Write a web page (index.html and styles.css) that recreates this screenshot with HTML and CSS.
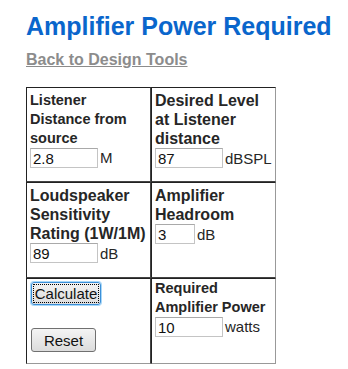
FILE: index.html
```html
<!DOCTYPE html>
<html lang="en">
<head>
  <meta charset="UTF-8">
  <meta name="viewport" content="width=device-width, initial-scale=1.0">
  <title>Amplifier Power Required</title>
  <link rel="stylesheet" href="styles.css">
</head>
<body>
  <div class="page">
    <h1 class="title">Amplifier Power Required</h1>
    <a class="back-link" href="#">Back to Design Tools</a>

    <table class="calc-table">
      <colgroup>
        <col class="col">
        <col class="col">
      </colgroup>
      <tr class="row-1">
        <td class="label-sm">
          Listener Distance from source<br>
          <input type="text" class="field" id="distance" value="2.8"><span class="unit">M</span>
        </td>
        <td class="last-col">
          Desired Level at Listener distance<br>
          <input type="text" class="field" id="level" value="87"><span class="unit">dBSPL</span>
        </td>
      </tr>
      <tr class="row-2">
        <td>
          Loudspeaker Sensitivity Rating (1W/1M)<br>
          <input type="text" class="field" id="sensitivity" value="89"><span class="unit">dB</span>
        </td>
        <td class="last-col">
          Amplifier Headroom<br>
          <input type="text" class="field field-short" id="headroom" value="3"><span class="unit">dB</span>
        </td>
      </tr>
      <tr class="row-3">
        <td class="last-row">
          <div class="buttons">
            <button type="button" class="btn btn-calc" onclick="calculate()">Calculate</button>
            <button type="button" class="btn btn-reset" onclick="resetForm()">Reset</button>
          </div>
        </td>
        <td class="last-col last-row label-sm result-cell">
          Required Amplifier Power<br>
          <input type="text" class="field" id="power" value="10"><span class="unit">watts</span>
        </td>
      </tr>
    </table>
  </div>

  <script>
    const distance = document.getElementById('distance');
    const level = document.getElementById('level');
    const sensitivity = document.getElementById('sensitivity');
    const headroom = document.getElementById('headroom');
    const power = document.getElementById('power');

    function calculate() {
      const d = parseFloat(distance.value);
      const spl = parseFloat(level.value);
      const sens = parseFloat(sensitivity.value);
      const head = parseFloat(headroom.value);
      if (isNaN(d) || isNaN(spl) || isNaN(sens) || isNaN(head)) {
        power.value = '';
        return;
      }
      const loss = 20 * Math.log10(d);
      const db = spl + head + loss - sens;
      power.value = Math.round(Math.pow(10, db / 10));
    }

    function resetForm() {
      distance.value = '';
      level.value = '';
      sensitivity.value = '';
      headroom.value = '';
      power.value = '';
    }
  </script>
</body>
</html>
```

FILE: styles.css
```css
body {
  margin: 0;
  background-color: #fff;
  font-family: "Liberation Sans", Arial, sans-serif;
  color: #222;
}

.page {
  padding: 12px 0 0 26px;
}

.title {
  margin: 0;
  font-size: 25px;
  line-height: 29px;
  font-weight: bold;
  color: #0a66cc;
}

.back-link {
  display: inline-block;
  margin-top: 10px;
  font-size: 16px;
  line-height: 18px;
  font-weight: bold;
  color: #8c8c8c;
}

.calc-table {
  margin-top: 18px;
  width: 250px;
  table-layout: fixed;
  border-collapse: separate;
  border-spacing: 0;
}

.col {
  width: 125px;
}

.calc-table td {
  vertical-align: top;
  padding: 3px 2px 3px 3px;
  font-size: 16px;
  line-height: 19px;
  font-weight: bold;
  color: #262626;
  border-top: 1px solid #222;
  border-left: 1px solid #222;
  border-right: 1px solid #444;
  border-bottom: 1px solid #444;
}

.calc-table td.last-col {
  border-right-color: #999;
}

.calc-table td.last-row {
  border-bottom-color: #999;
}

.calc-table td.label-sm {
  font-size: 14.5px;
}

.calc-table td.result-cell {
  padding-top: 0;
}

.row-1 {
  height: 95px;
}

.row-2 {
  height: 96px;
}

.row-3 {
  height: 86px;
}

.field {
  box-sizing: border-box;
  width: 68px;
  height: 20px;
  margin: 0;
  padding: 1px 2px;
  font-family: "Liberation Sans", Arial, sans-serif;
  font-size: 15px;
  color: #111;
  border: 1px solid #c4c4c4;
  border-top-color: #a9a9a9;
  vertical-align: bottom;
}

.field-short {
  width: 40px;
}

.unit {
  margin-left: 2px;
  font-size: 15px;
  font-weight: normal;
  color: #262626;
}

.buttons {
  display: flex;
  flex-direction: column;
  align-items: flex-start;
  gap: 23px;
  padding-left: 1px;
}

.btn {
  box-sizing: border-box;
  height: 24px;
  margin: 0;
  padding: 0;
  font-family: "Liberation Sans", Arial, sans-serif;
  font-size: 15px;
  color: #111;
  background: linear-gradient(#f4f4f4, #dcdcdc);
  border: 1px solid #707070;
  border-radius: 3px;
  cursor: pointer;
}

.btn-calc {
  width: 70px;
  height: 23px;
  border: 1px solid #3c8fd8;
  box-shadow: 0 0 0 1px #a8d8f8;
  outline: 1px dotted #000;
  outline-offset: -3px;
  background: linear-gradient(#f2f2f2, #dddddd);
}

.btn-reset {
  width: 65px;
}
```
